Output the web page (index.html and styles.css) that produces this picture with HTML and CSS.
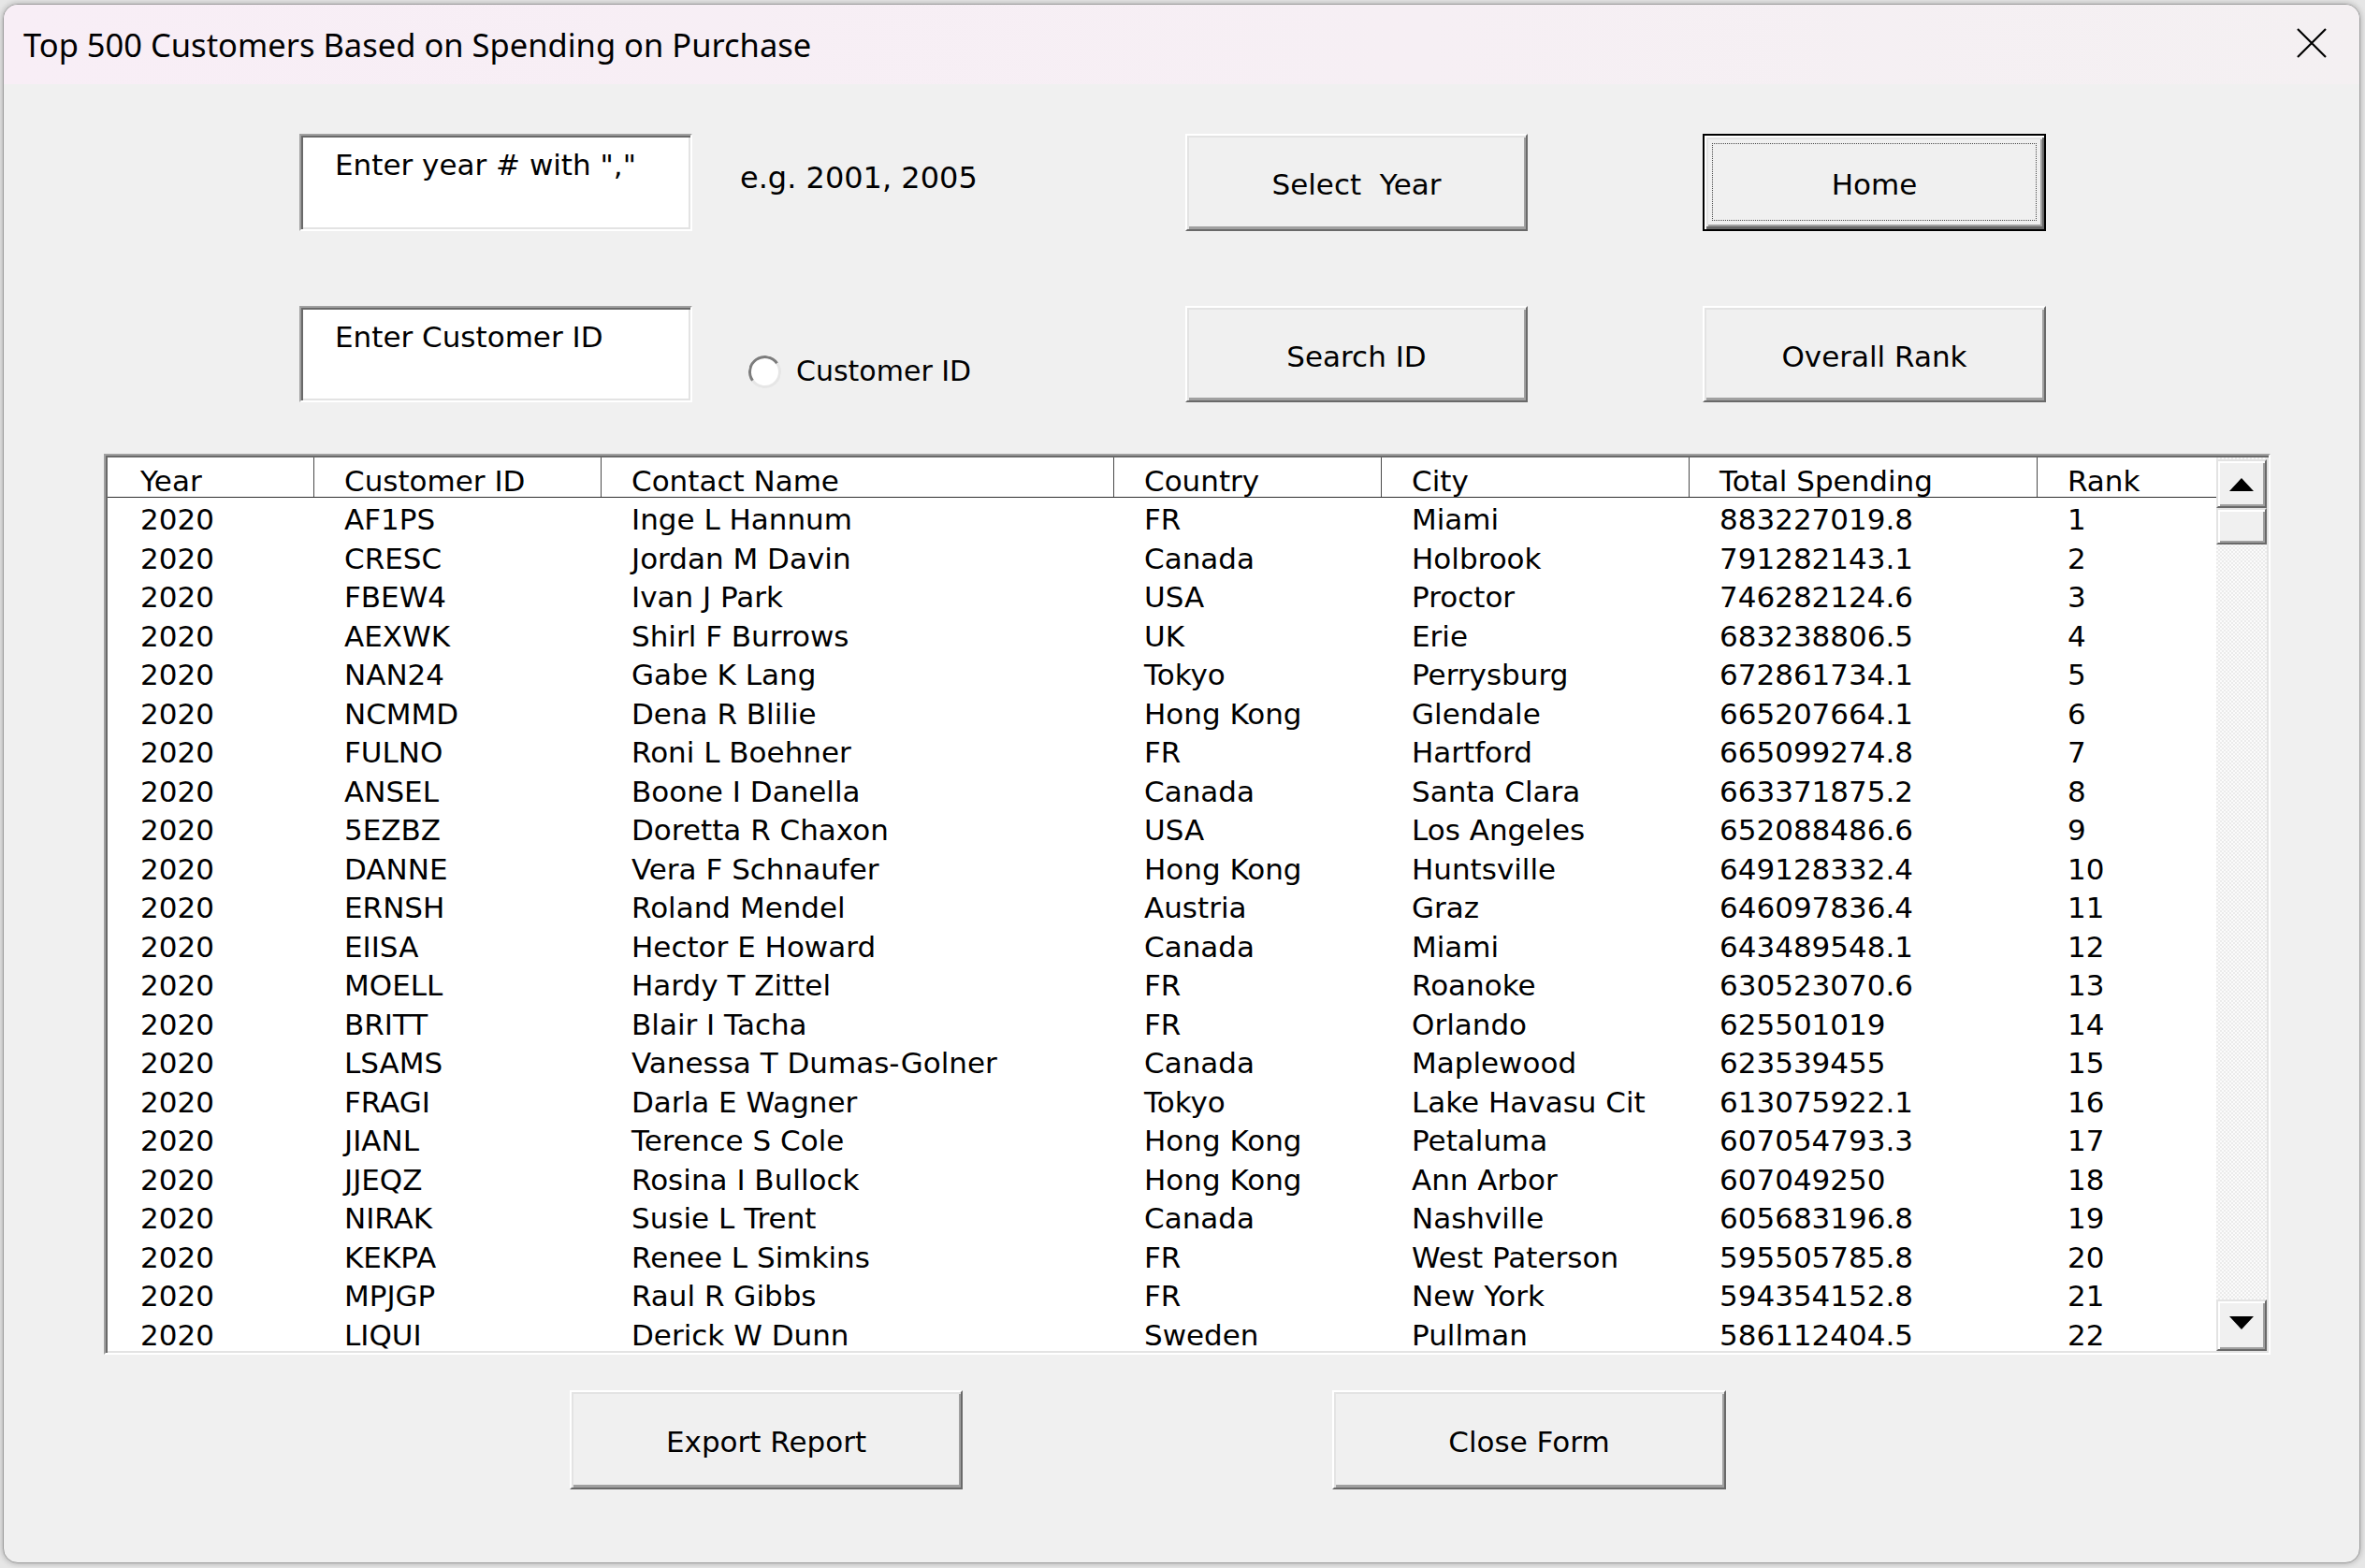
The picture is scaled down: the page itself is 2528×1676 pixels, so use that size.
FILE: index.html
```html
<!DOCTYPE html>
<html lang="en">
<head>
<meta charset="utf-8">
<title>Top 500 Customers Based on Spending on Purchase</title>
<link rel="stylesheet" href="styles.css">
</head>
<body>
<div class="window">
  <div class="titlebar">
    <span class="title">Top 500 Customers Based on Spending on Purchase</span>
    <svg class="close" width="32" height="32" viewBox="0 0 32 32" aria-label="Close">
      <path d="M1 1 L31 31 M31 1 L1 31" stroke="#000" stroke-width="2.2" fill="none"/>
    </svg>
  </div>

  <div class="controls">
    <div class="textbox">Enter year # with ","</div>
    <div class="hint">e.g. 2001, 2005</div>
    <button class="btn">Select  Year</button>
    <button class="btn btn-default col-last"><span class="focus">Home</span></button>

    <div class="textbox">Enter Customer ID</div>
    <label class="radio"><span class="radio-dot"></span><span>Customer ID</span></label>
    <button class="btn">Search ID</button>
    <button class="btn col-last">Overall Rank</button>
  </div>

  <div class="listbox">
    <div class="list-content">
      <div class="row header">
        <div class="cell">Year</div><div class="cell">Customer ID</div><div class="cell">Contact Name</div><div class="cell">Country</div><div class="cell">City</div><div class="cell">Total Spending</div><div class="cell">Rank</div>
      </div>
      <div class="rows">
        <div class="row"><div class="cell">2020</div><div class="cell">AF1PS</div><div class="cell">Inge L Hannum</div><div class="cell">FR</div><div class="cell">Miami</div><div class="cell">883227019.8</div><div class="cell">1</div></div>
        <div class="row"><div class="cell">2020</div><div class="cell">CRESC</div><div class="cell">Jordan M Davin</div><div class="cell">Canada</div><div class="cell">Holbrook</div><div class="cell">791282143.1</div><div class="cell">2</div></div>
        <div class="row"><div class="cell">2020</div><div class="cell">FBEW4</div><div class="cell">Ivan J Park</div><div class="cell">USA</div><div class="cell">Proctor</div><div class="cell">746282124.6</div><div class="cell">3</div></div>
        <div class="row"><div class="cell">2020</div><div class="cell">AEXWK</div><div class="cell">Shirl F Burrows</div><div class="cell">UK</div><div class="cell">Erie</div><div class="cell">683238806.5</div><div class="cell">4</div></div>
        <div class="row"><div class="cell">2020</div><div class="cell">NAN24</div><div class="cell">Gabe K Lang</div><div class="cell">Tokyo</div><div class="cell">Perrysburg</div><div class="cell">672861734.1</div><div class="cell">5</div></div>
        <div class="row"><div class="cell">2020</div><div class="cell">NCMMD</div><div class="cell">Dena R Blilie</div><div class="cell">Hong Kong</div><div class="cell">Glendale</div><div class="cell">665207664.1</div><div class="cell">6</div></div>
        <div class="row"><div class="cell">2020</div><div class="cell">FULNO</div><div class="cell">Roni L Boehner</div><div class="cell">FR</div><div class="cell">Hartford</div><div class="cell">665099274.8</div><div class="cell">7</div></div>
        <div class="row"><div class="cell">2020</div><div class="cell">ANSEL</div><div class="cell">Boone I Danella</div><div class="cell">Canada</div><div class="cell">Santa Clara</div><div class="cell">663371875.2</div><div class="cell">8</div></div>
        <div class="row"><div class="cell">2020</div><div class="cell">5EZBZ</div><div class="cell">Doretta R Chaxon</div><div class="cell">USA</div><div class="cell">Los Angeles</div><div class="cell">652088486.6</div><div class="cell">9</div></div>
        <div class="row"><div class="cell">2020</div><div class="cell">DANNE</div><div class="cell">Vera F Schnaufer</div><div class="cell">Hong Kong</div><div class="cell">Huntsville</div><div class="cell">649128332.4</div><div class="cell">10</div></div>
        <div class="row"><div class="cell">2020</div><div class="cell">ERNSH</div><div class="cell">Roland Mendel</div><div class="cell">Austria</div><div class="cell">Graz</div><div class="cell">646097836.4</div><div class="cell">11</div></div>
        <div class="row"><div class="cell">2020</div><div class="cell">EIISA</div><div class="cell">Hector E Howard</div><div class="cell">Canada</div><div class="cell">Miami</div><div class="cell">643489548.1</div><div class="cell">12</div></div>
        <div class="row"><div class="cell">2020</div><div class="cell">MOELL</div><div class="cell">Hardy T Zittel</div><div class="cell">FR</div><div class="cell">Roanoke</div><div class="cell">630523070.6</div><div class="cell">13</div></div>
        <div class="row"><div class="cell">2020</div><div class="cell">BRITT</div><div class="cell">Blair I Tacha</div><div class="cell">FR</div><div class="cell">Orlando</div><div class="cell">625501019</div><div class="cell">14</div></div>
        <div class="row"><div class="cell">2020</div><div class="cell">LSAMS</div><div class="cell">Vanessa T Dumas-Golner</div><div class="cell">Canada</div><div class="cell">Maplewood</div><div class="cell">623539455</div><div class="cell">15</div></div>
        <div class="row"><div class="cell">2020</div><div class="cell">FRAGI</div><div class="cell">Darla E Wagner</div><div class="cell">Tokyo</div><div class="cell">Lake Havasu Cit</div><div class="cell">613075922.1</div><div class="cell">16</div></div>
        <div class="row"><div class="cell">2020</div><div class="cell">JIANL</div><div class="cell">Terence S Cole</div><div class="cell">Hong Kong</div><div class="cell">Petaluma</div><div class="cell">607054793.3</div><div class="cell">17</div></div>
        <div class="row"><div class="cell">2020</div><div class="cell">JJEQZ</div><div class="cell">Rosina I Bullock</div><div class="cell">Hong Kong</div><div class="cell">Ann Arbor</div><div class="cell">607049250</div><div class="cell">18</div></div>
        <div class="row"><div class="cell">2020</div><div class="cell">NIRAK</div><div class="cell">Susie L Trent</div><div class="cell">Canada</div><div class="cell">Nashville</div><div class="cell">605683196.8</div><div class="cell">19</div></div>
        <div class="row"><div class="cell">2020</div><div class="cell">KEKPA</div><div class="cell">Renee L Simkins</div><div class="cell">FR</div><div class="cell">West Paterson</div><div class="cell">595505785.8</div><div class="cell">20</div></div>
        <div class="row"><div class="cell">2020</div><div class="cell">MPJGP</div><div class="cell">Raul R Gibbs</div><div class="cell">FR</div><div class="cell">New York</div><div class="cell">594354152.8</div><div class="cell">21</div></div>
        <div class="row"><div class="cell">2020</div><div class="cell">LIQUI</div><div class="cell">Derick W Dunn</div><div class="cell">Sweden</div><div class="cell">Pullman</div><div class="cell">586112404.5</div><div class="cell">22</div></div>
      </div>
    </div>
    <div class="scrollbar">
      <div class="sbtn sbtn-up">
        <svg width="26" height="14" viewBox="0 0 26 14"><polygon points="13,0 26,14 0,14" fill="#000"/></svg>
      </div>
      <div class="sbtn sbtn-thumb"></div>
      <div class="track"></div>
      <div class="sbtn sbtn-down">
        <svg width="26" height="14" viewBox="0 0 26 14"><polygon points="0,0 26,0 13,14" fill="#000"/></svg>
      </div>
    </div>
  </div>

  <div class="bottom">
    <button class="btn btn-wide btn-export">Export Report</button>
    <button class="btn btn-wide btn-close">Close Form</button>
  </div>
</div>
</body>
</html>
```

FILE: styles.css
```css
html, body {
  margin: 0;
  padding: 0;
}

body {
  width: 2528px;
  height: 1676px;
  overflow: hidden;
  background: #e6e6e6;
  font-family: "DejaVu Sans", "Liberation Sans", sans-serif;
  color: #000;
}

.window {
  box-sizing: border-box;
  margin: 4px 0 0 3px;
  width: 2520px;
  height: 1667px;
  background: #f0f0f0;
  border: 1px solid #9c9c9c;
  border-radius: 16px;
  box-shadow: 0 0 6px rgba(0, 0, 0, 0.28);
  display: flex;
  flex-direction: column;
  overflow: hidden;
}

/* ---------- title bar ---------- */
.titlebar {
  flex: none;
  height: 85px;
  display: flex;
  align-items: center;
  justify-content: space-between;
  padding: 0 35px 0 21px;
  background: linear-gradient(90deg, #f8eef6 0%, #f6eff4 60%, #f4f0f2 100%);
}

.title {
  font-family: "Noto Sans", "Open Sans", sans-serif;
  font-size: 34.5px;
  color: #000;
  white-space: nowrap;
}

.close {
  display: block;
  margin-bottom: 4px;
}

/* ---------- top controls ---------- */
.controls {
  display: grid;
  grid-template-columns: 420px 527px 366px 187px 367px;
  grid-template-rows: 104px 103px;
  row-gap: 80px;
  margin: 53px 0 0 316px;
}

.col-last {
  grid-column: 5;
}

.textbox {
  box-sizing: border-box;
  background: #fff;
  border: 2px solid;
  border-color: #a0a0a0 #fff #fff #a0a0a0;
  box-shadow: inset 2px 2px 0 #696969, inset -2px -2px 0 #e3e3e3;
  padding: 13px 0 0 36px;
  font-size: 31px;
  line-height: 36px;
  white-space: nowrap;
}

.hint {
  align-self: start;
  margin-top: 29px;
  padding-left: 51px;
  font-size: 32px;
  line-height: 37px;
  white-space: nowrap;
}

.radio {
  align-self: end;
  margin-bottom: 15px;
  padding-left: 60px;
  display: flex;
  align-items: center;
  gap: 16px;
  font-size: 30px;
  line-height: 36px;
  white-space: nowrap;
}

.radio-dot {
  box-sizing: border-box;
  width: 35px;
  height: 35px;
  border-radius: 50%;
  background: #fff;
  border: 3px solid;
  border-color: #7c7c7c #e6e6e6 #e6e6e6 #7c7c7c;
  transform: rotate(10deg);
}

/* ---------- classic buttons ---------- */
.btn {
  box-sizing: border-box;
  margin: 0;
  padding: 4px 0 0 0;
  display: flex;
  align-items: center;
  justify-content: center;
  background: #f0f0f0;
  border: 2px solid;
  border-color: #fff #696969 #696969 #fff;
  box-shadow: inset 2px 2px 0 #e3e3e3, inset -2px -3px 0 #a0a0a0;
  font-family: "DejaVu Sans", "Liberation Sans", sans-serif;
  font-size: 31px;
  color: #000;
  white-space: pre;
  cursor: default;
}

.btn-default {
  padding: 0;
  border: 2px solid #000;
  box-shadow: inset 2px 2px 0 #fff, inset -2px -3px 0 #696969, inset 4px 4px 0 #e3e3e3, inset -4px -5px 0 #a0a0a0;
  align-items: stretch;
}

.focus {
  flex: 1;
  margin: 8px 8px 9px 8px;
  padding-top: 4px;
  border: 1px dotted #4a4a4a;
  display: flex;
  align-items: center;
  justify-content: center;
}

/* ---------- list box ---------- */
.listbox {
  flex: none;
  box-sizing: border-box;
  margin: 55px 0 0 107px;
  width: 2316px;
  height: 963px;
  border: 2px solid;
  border-color: #a0a0a0 #fff #fff #a0a0a0;
  padding: 2px;
  box-shadow: inset 2px 2px 0 #696969, inset -2px -2px 0 #e3e3e3;
  background: #fff;
  display: flex;
}

.list-content {
  flex: 1;
  overflow: hidden;
  background: #fff;
}

.row {
  display: grid;
  grid-template-columns: 221px 307px 548px 286px 329px 372px 1fr;
  font-size: 31px;
  line-height: 41.5px;
  white-space: nowrap;
}

.cell {
  box-sizing: border-box;
  padding-left: 32px;
  overflow: hidden;
}

.row .cell:first-child {
  padding-left: 35px;
}

.header {
  border-bottom: 1px solid #2e2e2e;
}

.header .cell {
  padding-top: 9px;
  line-height: 33px;
  border-right: 1px solid #4a4a4a;
}

.header .cell:last-child {
  border-right: none;
}

.rows {
  padding-top: 3px;
}

/* ---------- scrollbar ---------- */
.scrollbar {
  flex: none;
  width: 54px;
  display: flex;
  flex-direction: column;
  padding-top: 2px;
  box-sizing: border-box;
  background-color: #f5f5f5;
  background-image: repeating-conic-gradient(#fbfbfb 0 25%, #ebebeb 0 50%);
  background-size: 4px 4px;
}

.sbtn {
  flex: none;
  box-sizing: border-box;
  background: #f0f0f0;
  border: 2px solid;
  border-color: #e3e3e3 #696969 #696969 #e3e3e3;
  box-shadow: inset 2px 2px 0 #fff, inset -2px -2px 0 #a0a0a0;
  display: flex;
  align-items: center;
  justify-content: center;
}

.sbtn-up {
  height: 52px;
  padding-top: 2px;
}

.sbtn-thumb {
  height: 39px;
}

.track {
  flex: 1;
}

.sbtn-down {
  height: 55px;
  padding-bottom: 6px;
}

/* ---------- bottom buttons ---------- */
.bottom {
  flex: none;
  display: flex;
  margin: 38px 0 0 605px;
  gap: 395px;
}

.btn-wide {
  height: 106px;
}

.btn-export {
  width: 420px;
}

.btn-close {
  width: 421px;
}
```
